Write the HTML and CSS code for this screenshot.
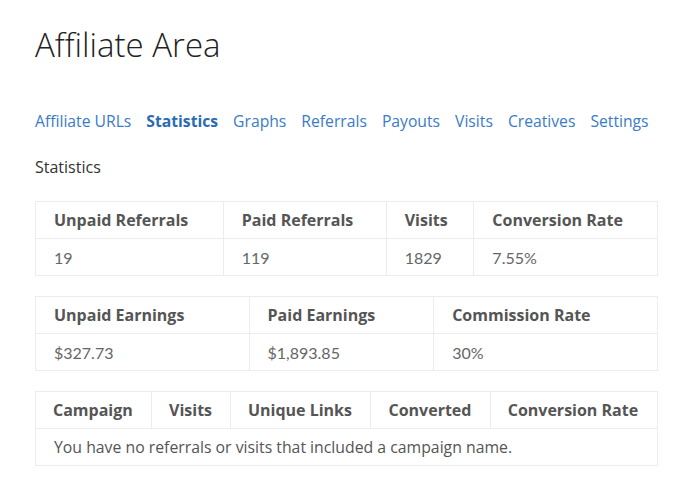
FILE: index.html
```html
<!DOCTYPE html>
<html lang="en">
<head>
    <meta charset="UTF-8">
    <meta name="viewport" content="width=device-width, initial-scale=1.0">
    <title>Affiliate Area</title>
    <link rel="stylesheet" href="styles.css">
</head>
<body>
    <div id="affiliate-area">
        <h1 class="page-title">Affiliate Area</h1>

        <ul class="affwp-tabs">
            <li><a href="#">Affiliate URLs</a></li>
            <li class="active"><a href="#">Statistics</a></li>
            <li><a href="#">Graphs</a></li>
            <li><a href="#">Referrals</a></li>
            <li><a href="#">Payouts</a></li>
            <li><a href="#">Visits</a></li>
            <li><a href="#">Creatives</a></li>
            <li><a href="#">Settings</a></li>
        </ul>

        <h4 class="tab-title">Statistics</h4>

        <table class="affwp-table">
            <thead>
                <tr>
                    <th>Unpaid Referrals</th>
                    <th>Paid Referrals</th>
                    <th>Visits</th>
                    <th>Conversion Rate</th>
                </tr>
            </thead>
            <tbody>
                <tr>
                    <td class="num">19</td>
                    <td class="num">119</td>
                    <td class="num">1829</td>
                    <td class="num">7.55%</td>
                </tr>
            </tbody>
        </table>

        <table class="affwp-table">
            <thead>
                <tr>
                    <th>Unpaid Earnings</th>
                    <th>Paid Earnings</th>
                    <th>Commission Rate</th>
                </tr>
            </thead>
            <tbody>
                <tr>
                    <td class="num">$327.73</td>
                    <td class="num">$1,893.85</td>
                    <td class="num">30%</td>
                </tr>
            </tbody>
        </table>

        <table class="affwp-table campaigns">
            <thead>
                <tr>
                    <th>Campaign</th>
                    <th>Visits</th>
                    <th>Unique Links</th>
                    <th>Converted</th>
                    <th>Conversion Rate</th>
                </tr>
            </thead>
            <tbody>
                <tr>
                    <td colspan="5">You have no referrals or visits that included a campaign name.</td>
                </tr>
            </tbody>
        </table>
    </div>
</body>
</html>
```

FILE: styles.css
```css
body {
    margin: 0;
    padding: 0;
    background: #fff;
    font-family: "Open Sans", "Noto Sans", sans-serif;
    color: #333;
}

#affiliate-area {
    padding: 20px 42px 0 35px;
}

.page-title {
    margin: 0;
    font-size: 33px;
    font-weight: 300;
    color: #222;
    line-height: 50px;
}

.affwp-tabs {
    list-style: none;
    display: flex;
    gap: 15px;
    margin: 37px 0 0;
    padding: 0;
    font-size: 15.7px;
    line-height: 28px;
    white-space: nowrap;
}

.affwp-tabs a {
    color: #3a7bc6;
    text-decoration: none;
}

.affwp-tabs .active a {
    font-weight: 700;
    color: #2a6bb5;
}

.tab-title {
    margin: 20px 0 0;
    font-size: 16px;
    font-weight: 400;
    line-height: 24px;
    color: #333;
}

.affwp-table {
    width: 100%;
    border-collapse: collapse;
    margin-top: 22px;
    font-size: 16px;
}

.affwp-table + .affwp-table {
    margin-top: 20px;
}

.affwp-table th,
.affwp-table td {
    border: 1px solid #ececec;
    padding: 0 18px;
    height: 36px;
    text-align: left;
    white-space: nowrap;
}

.affwp-table th {
    font-weight: 700;
    color: #555;
}

.affwp-table td {
    color: #555;
}

.affwp-table.campaigns th {
    padding: 0 17px;
}

.affwp-table.campaigns td {
    font-size: 15.8px;
}

.affwp-table td.num {
    font-family: "Lato", sans-serif;
    color: #666;
}
```
